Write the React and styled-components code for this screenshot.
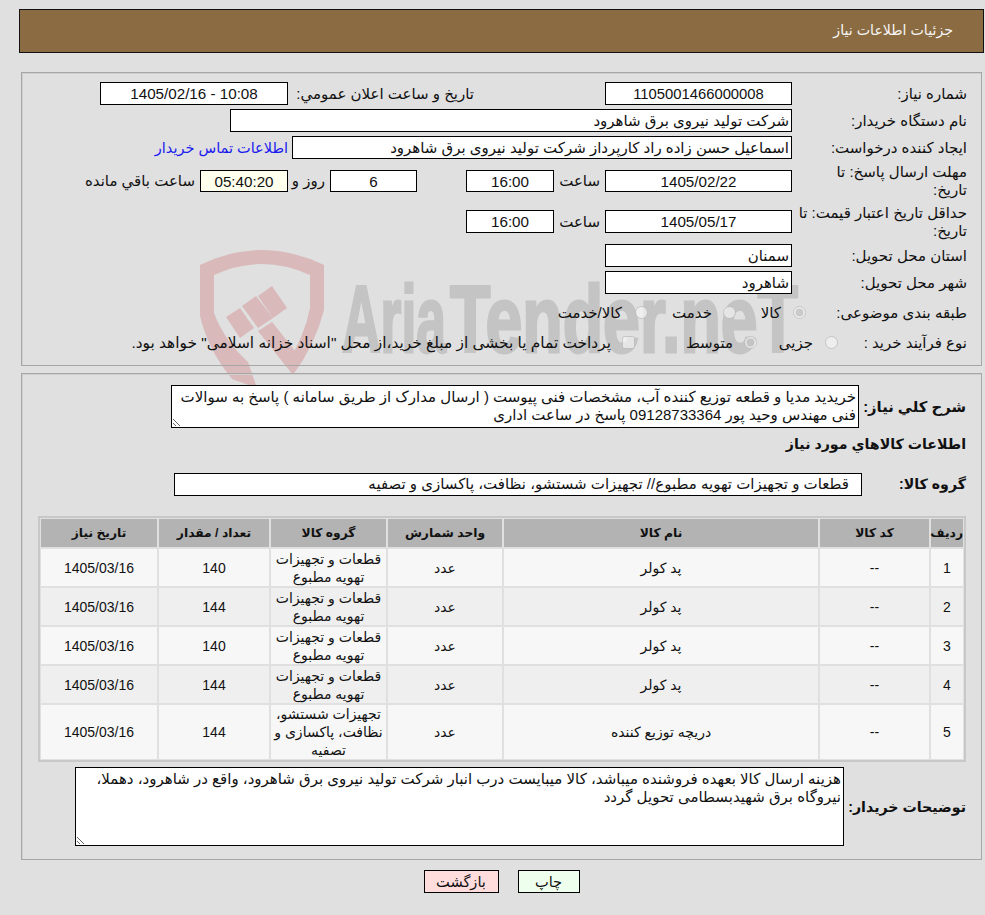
import React from "react";
import styled, { createGlobalStyle } from "styled-components";

const Global = createGlobalStyle`
  html, body { margin: 0; padding: 0; background: #e0e0e0; }
  body { font-family: "Liberation Sans", "DejaVu Sans", sans-serif; font-size: 15px; color: #111; }
  * { box-sizing: border-box; }
`;

const Page = styled.div`
  position: relative;
  isolation: isolate;
  width: 985px;
  height: 915px;
  padding: 9px 1px 0 19px;
  overflow: hidden;
  direction: rtl;
`;

const Watermark = styled.svg`
  position: absolute;
  left: 0;
  top: 0;
  z-index: -1;
  pointer-events: none;
  direction: ltr;
`;

const Header = styled.div`
  width: 965px;
  height: 44px;
  background: #8b6b41;
  border: 1px solid #111;
  color: #f6f6f6;
  font-size: 14.2px;
  display: flex;
  align-items: center;
  padding: 0 30px 3px 0;
  margin-bottom: 19px;
`;

const Panel = styled.section`
  width: 961px;
  margin-right: 2px;
  border: 1px solid #a6a6a6;
  box-shadow: inset 1px 1px 0 #cfcfcf;
  padding: ${(p) => p.$pad};
  margin-bottom: ${(p) => p.$mb || 0}px;
`;

const Row = styled.div`
  display: flex;
  align-items: center;
  height: ${(p) => p.$h}px;
`;

const Label = styled.div`
  width: ${(p) => p.$w || 175}px;
  flex: none;
  line-height: 18px;
  font-weight: ${(p) => (p.$bold ? 700 : 400)};
  font-size: ${(p) => p.$fs || (p.$bold ? 14.2 : 15)}px;
`;

const Field = styled.input`
  width: ${(p) => p.$w}px;
  flex: none;
  height: ${(p) => p.$h || 23}px;
  margin: 0;
  margin-inline-start: ${(p) => p.$ms || 0}px;
  padding: 0 ${(p) => p.$pr ?? 2}px 0 2px;
  border: 1px solid #000;
  border-radius: 0;
  outline: none;
  background: ${(p) => p.$bg || "#fff"};
  color: #111;
  font-family: inherit;
  font-size: ${(p) => p.$fs || 15}px;
  text-align: ${(p) => p.$align || "right"};
`;

const Text = styled.span`
  flex: none;
  white-space: nowrap;
  width: ${(p) => (p.$w ? `${p.$w}px` : "auto")};
  font-size: ${(p) => p.$fs || 15}px;
  margin-inline-start: ${(p) => p.$ms || 0}px;
`;

const Link = styled(Text)`
  color: #1a1aee;
  font-size: 14.5px;
`;

const Radio = styled.input`
  width: 13px;
  height: 13px;
  margin: 0;
  margin-inline-start: ${(p) => p.$ms || 0}px;
  margin-inline-end: ${(p) => p.$me || 11}px;
  flex: none;
  transform: translateY(-1px);
`;

const Area = styled.textarea`
  display: block;
  width: ${(p) => p.$w}px;
  height: ${(p) => p.$h}px;
  flex: none;
  margin: 0;
  padding: 2px 2px 0;
  border: 1px solid #000;
  border-radius: 0;
  outline: none;
  background: #fff;
  color: #111;
  font-family: inherit;
  font-size: 15px;
  line-height: 18px;
  overflow: hidden;
`;

const Table = styled.table`
  width: 928px;
  margin-top: ${(p) => p.$mt}px;
  margin-bottom: 5px;
  border-collapse: separate;
  border-spacing: 2px;
  border: 1px solid #c8c8c8;
  box-shadow: inset 0 0 0 1px #c8c8c8;
  table-layout: fixed;
`;

const Th = styled.th`
  height: 28px;
  padding: 0;
  background: #b3b3b3;
  color: #111;
  font-size: 12.3px;
  font-weight: 700;
`;

const Td = styled.td`
  height: 37px;
  padding: 0 2px;
  background: ${(p) => (p.$alt ? "#efefef" : "#f7f7f7")};
  text-align: center;
  line-height: 18px;
  font-size: 14px;
`;

const Buttons = styled.div`
  display: flex;
  justify-content: center;
  gap: 19px;
  width: 965px;
`;

const Button = styled.button`
  width: ${(p) => p.$w}px;
  height: 23px;
  padding: 0;
  border: 1px solid #000;
  border-radius: 0;
  background: ${(p) => p.$bg};
  color: #111;
  font-family: inherit;
  font-size: 14.6px;
`;

const rows = [
  ["1", "--", "پد کولر", "عدد", "قطعات و تجهیزات تهویه مطبوع", "140"],
  ["2", "--", "پد کولر", "عدد", "قطعات و تجهیزات تهویه مطبوع", "144"],
  ["3", "--", "پد کولر", "عدد", "قطعات و تجهیزات تهویه مطبوع", "140"],
  ["4", "--", "پد کولر", "عدد", "قطعات و تجهیزات تهویه مطبوع", "144"],
  ["5", "--", "دریچه توزیع کننده", "عدد", "تجهیزات شستشو، نظافت، پاکسازی و تصفیه", "144"],
];

const widths = [32, 109, 314, 114, 115, 110, 116];
const heads = ["ردیف", "کد کالا", "نام کالا", "واحد شمارش", "گروه کالا", "تعداد / مقدار", "تاریخ نیاز"];

export default function App() {
  return (
    <Page>
      <Global />
      <Watermark width="985" height="915" viewBox="0 0 985 915">
        <g fill="#d9b9ba">
          <path d="M200 265 Q262 235 324 265 L324 310 Q315 345 293 375 L287 364 Q305 335 310 308 L310 275 Q262 253 214 275 L214 313 Q224 340 248 362 L257 388 L232 379 Q208 350 200 316 Z" />
          <path d="M226 317 L240 308 L254 328 L240 338 Z" />
          <path d="M242 306 L256 296 L273 318 L258 328 Z" />
          <path d="M258 296 L272 286 L287 308 L273 318 Z" />
          <path d="M258 331 L272 322 L300 357 L293 375 Z" />
        </g>
        <g fill="#c4c4c4" stroke="#c4c4c4" strokeWidth="3" fontFamily="Liberation Sans" fontWeight="700" fontSize="95">
          <text x="342" y="352" textLength="104" lengthAdjust="spacingAndGlyphs">Aria</text>
          <text x="450" y="352" textLength="348" lengthAdjust="spacingAndGlyphs">Tender.neT</text>
        </g>
      </Watermark>

      <Header>جزئیات اطلاعات نیاز</Header>

      <Panel $pad="7px 14px 9px 0" $mb={7}>
        <Row $h={27}>
          <Label>شماره نیاز:</Label>
          <Field readOnly $w={187} $fs={14.8} $align="center" value="1105001466000008" />
          <Text $ms={131} $w={181}>تاریخ و ساعت اعلان عمومي:</Text>
          <Field readOnly $w={188} $ms={5} $fs={15.2} $align="center" value="10:08 - 1405/02/16" />
        </Row>
        <Row $h={27}>
          <Label>نام دستگاه خریدار:</Label>
          <Field readOnly $w={562} value="شرکت تولید نیروی برق شاهرود" />
        </Row>
        <Row $h={27}>
          <Label>ایجاد کننده درخواست:</Label>
          <Field readOnly $w={500} value="اسماعیل حسن زاده راد کارپرداز شرکت تولید نیروی برق شاهرود" />
          <Link $ms={4}>اطلاعات تماس خریدار</Link>
        </Row>
        <Row $h={40}>
          <Label>مهلت ارسال پاسخ: تا<br />تاریخ:</Label>
          <Field readOnly $w={187} $h={22} $fs={15.2} $align="center" value="1405/02/22" />
          <Text $ms={5} $w={46}>ساعت</Text>
          <Field readOnly $w={88} $h={22} $fs={15.2} $align="center" value="16:00" />
          <Field readOnly $w={87} $h={22} $ms={49} $fs={15.2} $align="center" value="6" />
          <Text $ms={5} $w={33}>روز و</Text>
          <Field readOnly $w={88} $h={22} $ms={4} $fs={15.2} $bg="#ffffee" $align="center" value="05:40:20" />
          <Text $ms={5}>ساعت باقي مانده</Text>
        </Row>
        <Row $h={41}>
          <Label>حداقل تاریخ اعتبار قیمت: تا<br />تاریخ:</Label>
          <Field readOnly $w={187} $fs={15.2} $align="center" value="1405/05/17" />
          <Text $ms={5} $w={46}>ساعت</Text>
          <Field readOnly $w={88} $fs={15.2} $align="center" value="16:00" />
        </Row>
        <Row $h={27}>
          <Label>استان محل تحویل:</Label>
          <Field readOnly $w={187} value="سمنان" />
        </Row>
        <Row $h={27}>
          <Label>شهر محل تحویل:</Label>
          <Field readOnly $w={187} value="شاهرود" />
        </Row>
        <Row $h={34}>
          <Label>طبقه بندی موضوعی:</Label>
          <Radio type="radio" name="a" disabled defaultChecked $ms={-14} $me={12} />
          <Text $w={20}>کالا</Text>
          <Radio type="radio" name="a" disabled $ms={25} />
          <Text $w={40}>خدمت</Text>
          <Radio type="radio" name="a" disabled $ms={24} $me={13} />
          <Text>کالا/خدمت</Text>
        </Row>
        <Row $h={26}>
          <Label>نوع فرآیند خرید :</Label>
          <Radio type="radio" name="b" disabled $ms={-46} $me={12} />
          <Text $w={35}>جزیی</Text>
          <Radio type="radio" name="b" disabled defaultChecked $ms={21} />
          <Text $w={45}>متوسط</Text>
          <Radio type="checkbox" disabled $ms={53} />
          <Text $fs={15.4}>پرداخت تمام یا بخشی از مبلغ خرید،از محل "اسناد خزانه اسلامی" خواهد بود.</Text>
        </Row>
      </Panel>

      <Panel $pad="11px 15px 13px 0" $mb={10}>
        <Row $h={43}>
          <Label $bold $w={107} $fs={14.8}>شرح کلي نیاز:</Label>
          <Area readOnly $w={688} $h={43} value="خریدید مدیا و قطعه توزیع کننده آب، مشخصات فنی پیوست ( ارسال مدارک از طریق سامانه ) پاسخ به سوالات فنی مهندس وحید پور 09128733364 پاسخ در ساعت اداری" />
        </Row>
        <Row $h={32}>
          <Label $bold $w={300}>اطلاعات کالاهاي مورد نیاز</Label>
        </Row>
        <Row $h={48}>
          <Label $bold $w={104}>گروه کالا:</Label>
          <Field readOnly $w={688} $pr={12} value="قطعات و تجهیزات تهویه مطبوع// تجهیزات شستشو، نظافت، پاکسازی و تصفیه" />
        </Row>
        <Table $mt={8}>
          <colgroup>
            {widths.map((w, i) => (
              <col key={i} style={{ width: w }} />
            ))}
          </colgroup>
          <thead>
            <tr>
              {heads.map((h) => (
                <Th key={h}>{h}</Th>
              ))}
            </tr>
          </thead>
          <tbody>
            {rows.map((r, i) => (
              <tr key={r[0]}>
                {r.map((c, j) => (
                  <Td key={j} $alt={i % 2 === 1}>{c}</Td>
                ))}
                <Td $alt={i % 2 === 1}>1405/03/16</Td>
              </tr>
            ))}
          </tbody>
        </Table>
        <Row $h={79}>
          <Label $bold $w={122}>توضیحات خریدار:</Label>
          <Area readOnly $w={769} $h={79} value="هزینه ارسال کالا بعهده فروشنده میباشد، کالا میبایست درب انبار شرکت تولید نیروی برق شاهرود، واقع در شاهرود، دهملا، نیروگاه برق شهیدبسطامی تحویل گردد" />
        </Row>
      </Panel>

      <Buttons>
        <Button $w={62} $bg="#eeffee">چاپ</Button>
        <Button $w={75} $bg="#ffdddd">بازگشت</Button>
      </Buttons>
    </Page>
  );
}
